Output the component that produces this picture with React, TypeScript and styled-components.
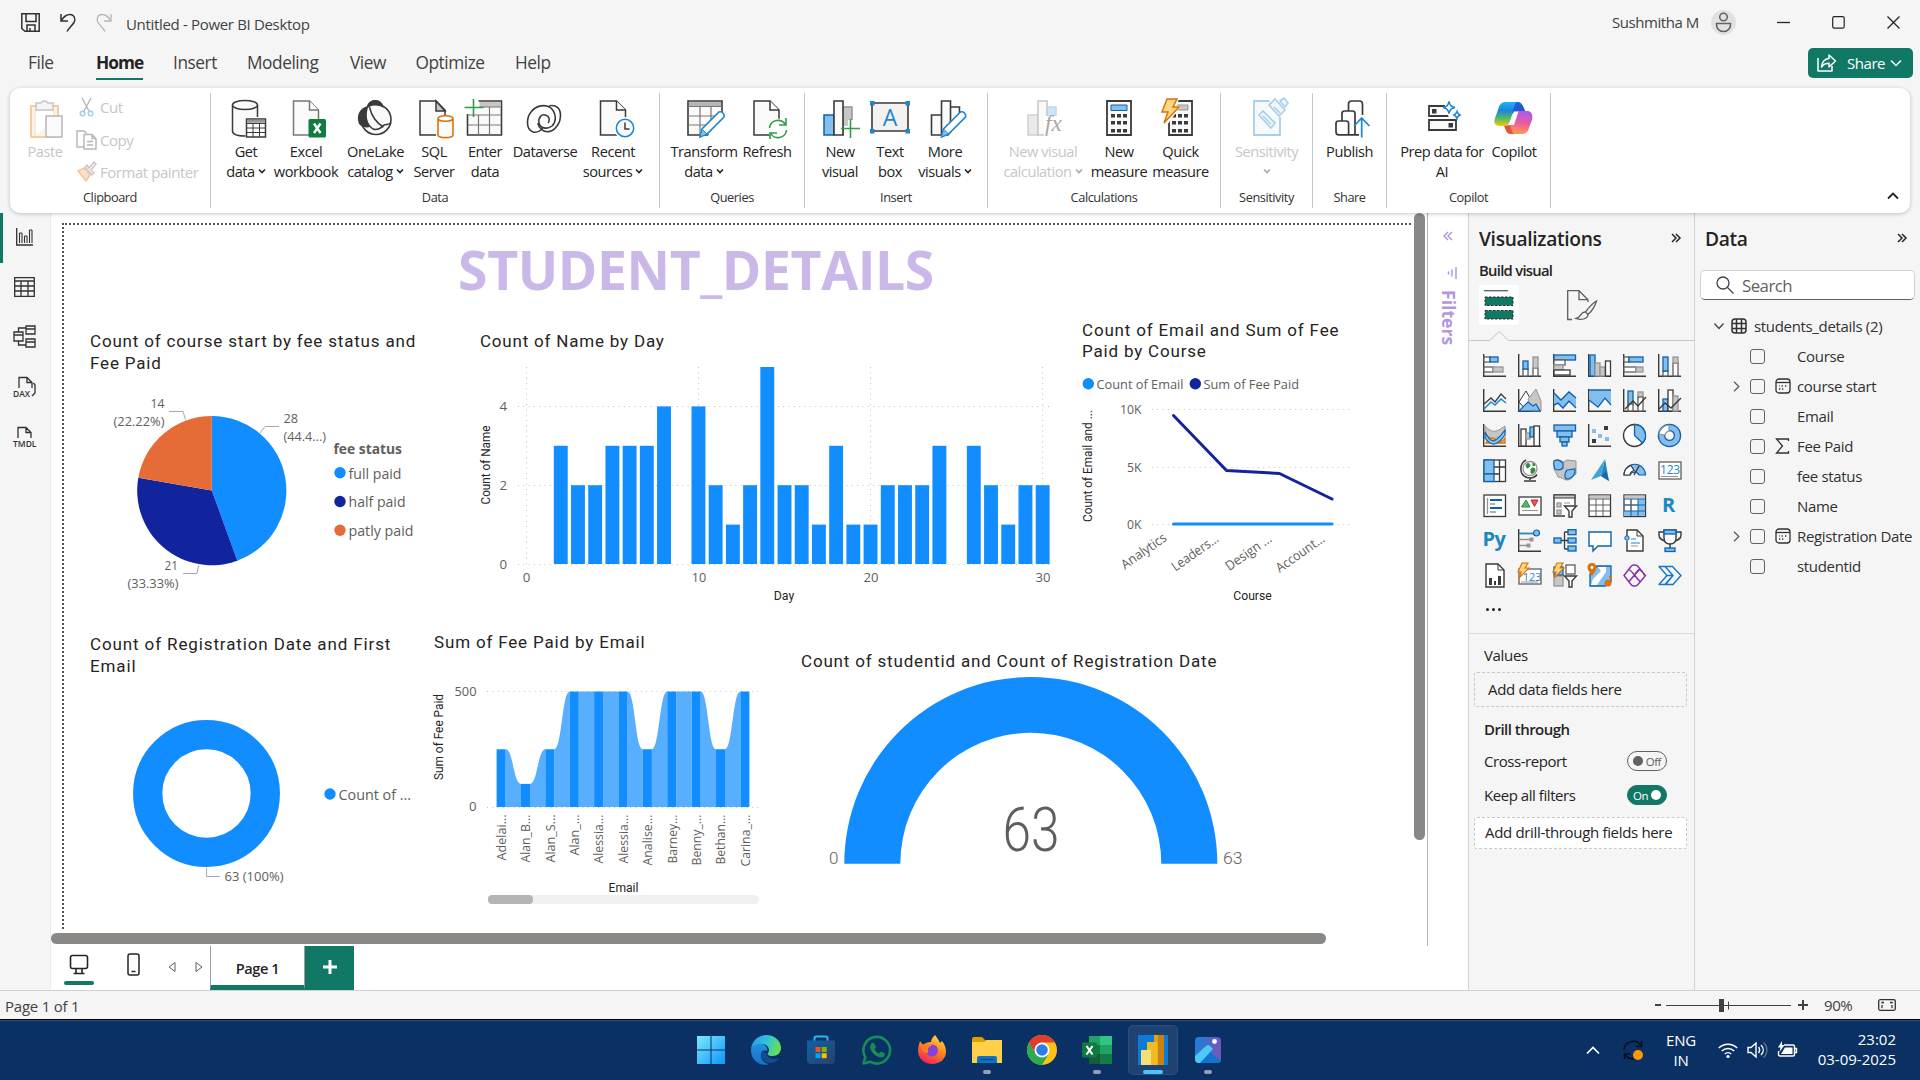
import React from "react";
import styled, { createGlobalStyle, css } from "styled-components";

const UI = '"Open Sans", "Noto Sans", sans-serif';
const DIN = 'Roboto, "Liberation Sans", sans-serif';
const GREEN = "#117865";
const BLUE = "#118dff";
const NAVY = "#12239e";
const ORANGE = "#e66c37";

const Global = createGlobalStyle`
  html, body { margin: 0; padding: 0; }
  body { background: #f5f5f5; font-family: ${UI}; color: #252423; overflow: hidden; }
  * { box-sizing: border-box; }
  svg { display: block; flex: none; overflow: visible; }
`;

/* ---------- shell ---------- */
const Shell = styled.div`
  width: 1920px;
  height: 1080px;
  display: flex;
  flex-direction: column;
  background: #f5f5f5;
  font-size: 15px;
  letter-spacing: -0.03em;
  white-space: nowrap;
`;

const TitleBar = styled.header`
  height: 40px;
  display: flex;
  align-items: center;
  padding: 4px 20px 0 21px;
  flex: none;
`;
const QuickIcons = styled.div`
  display: flex;
  gap: 18px;
  width: 105px;
`;
const DocTitle = styled.div`
  flex: 1;
  padding-top: 4px;
  letter-spacing: -0.022em;
  color: #424242;
`;
const UserName = styled.div`
  width: 92px;
  color: #424242;
`;
const Avatar = styled.div`
  width: 25px;
  height: 25px;
  border-radius: 50%;
  background: #e1e1e1;
  display: grid;
  place-items: center;
  margin: 0 41px 0 7px;
`;
const WindowButtons = styled.div`
  display: flex;
  gap: 42px;
`;

const MenuBar = styled.nav`
  height: 48px;
  display: flex;
  padding: 0 7px 0 28px;
  flex: none;
`;
const MenuSlot = styled.div<{ $w: number }>`
  width: ${(p) => p.$w}px;
  display: flex;
  align-items: flex-start;
`;
const MenuItem = styled.span<{ $active?: boolean }>`
  font-size: 17.3px;
  line-height: 46px;
  height: 40px;
  color: #424242;
  ${(p) =>
    p.$active &&
    css`
      color: #242424;
      font-weight: 700;
      letter-spacing: -0.055em;
      border-bottom: 2px solid ${GREEN};
    `}
`;
const ShareButton = styled.button`
  margin: 8px 0 0 auto;
  width: 105px;
  height: 30px;
  border: 0;
  border-radius: 5px;
  background: ${GREEN};
  color: #fff;
  font: 15px ${UI};
  letter-spacing: -0.03em;
  display: flex;
  align-items: center;
  padding: 0 10px 0 9px;
  gap: 10px;
  span {
    width: 35px;
  }
  svg:last-child {
    margin-left: -2px;
  }
`;

/* ---------- ribbon ---------- */
const Ribbon = styled.section`
  margin: 0 10px;
  height: 125px;
  flex: none;
  display: flex;
  background: #fff;
  border-radius: 10px;
  box-shadow: 0 1px 4px rgba(0, 0, 0, 0.22);
  padding: 5px 0;
  position: relative;
  z-index: 2;
`;
const Group = styled.div<{ $w: number }>`
  width: ${(p) => p.$w}px;
  border-right: 1px solid #c8c6c4;
  display: flex;
  flex-direction: column;
`;
const GroupBody = styled.div<{ $pl: number }>`
  display: flex;
  height: 96px;
  padding: 5px 0 0 ${(p) => p.$pl}px;
`;
const GroupLabel = styled.div`
  font-size: 12.8px;
  line-height: 16px;
  text-align: center;
  color: #323130;
`;
const RibbonButton = styled.div<{ $w: number; $off?: boolean }>`
  width: ${(p) => p.$w}px;
  display: flex;
  flex-direction: column;
  align-items: center;
  font-size: 14.6px;
  line-height: 20px;
  color: ${(p) => (p.$off ? "#c8c6c4" : "#252423")};
  svg.icon {
    margin-bottom: 1px;
  }
`;
const ButtonLine = styled.div`
  display: flex;
  align-items: center;
  gap: 3px;
  height: 20px;
`;
const ClipList = styled.div`
  display: flex;
  flex-direction: column;
  gap: 12.5px;
  padding: 0 0 0 7px;
  margin-top: -1px;
`;
const ClipItem = styled.div`
  display: flex;
  align-items: center;
  gap: 3px;
  height: 20px;
  color: #c8c6c4;
`;
const RibbonEnd = styled.div`
  flex: 1;
  display: flex;
  justify-content: flex-end;
  align-items: flex-end;
  padding: 0 11px 8px 0;
`;

/* ---------- workspace ---------- */
const Workspace = styled.main`
  flex: 1;
  display: flex;
  min-height: 0;
`;
const Rail = styled.aside`
  width: 51px;
  display: flex;
  flex-direction: column;
  border-right: 1px solid #ebebeb;
`;
const RailItem = styled.div<{ $active?: boolean }>`
  height: 50px;
  display: grid;
  place-items: center;
  padding: 0 4px 3px 0;
  border-left: 3px solid ${(p) => (p.$active ? GREEN : "transparent")};
`;
const Center = styled.div`
  width: 1417px;
  background: #fff;
  display: flex;
  flex-direction: column;
`;
const CanvasRow = styled.div`
  height: 733px;
  display: flex;
`;
const CanvasArea = styled.div`
  width: 1377px;
  border-right: 1px solid #b8b6b4;
  display: grid;
  grid-template-columns: 1363px 13px;
  grid-template-rows: 720px 13px;
`;
const ReportPage = styled.div`
  position: relative;
  margin: 10px 3px 4px 11px;
  border-top: 2px dotted #555;
  border-left: 2px dotted #555;
`;
const VScroll = styled.div`
  width: 11px;
  height: 627px;
  border-radius: 6px;
  background: #8a8886;
`;
const HScroll = styled.div`
  width: 1275px;
  height: 11px;
  border-radius: 6px;
  background: #8a8886;
`;
const FiltersPane = styled.div`
  width: 40px;
  display: flex;
  flex-direction: column;
  align-items: center;
  padding-top: 18px;
  color: #b296e0;
`;
const FiltersLabel = styled.div`
  writing-mode: vertical-rl;
  font-weight: 700;
  font-size: 17.6px;
  letter-spacing: 0;
  line-height: 22px;
  margin-top: 11px;
  padding-left: 1px;
`;

/* Visuals sit freely on the report page; x and y are in window pixels. */
const Visual = styled.div<{ $x: number; $y: number; $w: number }>`
  position: absolute;
  left: ${(p) => p.$x - 64}px;
  top: ${(p) => p.$y - 225}px;
  width: ${(p) => p.$w}px;
`;
const VisualTitle = styled.div<{ $ls?: number; $lh?: number }>`
  font-family: ${DIN};
  font-size: 17px;
  line-height: ${(p) => p.$lh ?? 22}px;
  letter-spacing: ${(p) => p.$ls ?? 0.83}px;
  color: #252423;
`;
const ReportHeading = styled.h1`
  margin: 0;
  font-size: 53.5px;
  line-height: 60px;
  font-weight: 700;
  letter-spacing: -0.0075em;
  color: #c9b8e8;
  text-align: center;
`;

/* ---------- page tabs ---------- */
const Tabs = styled.div`
  flex: 1;
  display: flex;
`;
const ViewToggle = styled.div<{ $w: number; $active?: boolean }>`
  width: ${(p) => p.$w}px;
  display: flex;
  flex-direction: column;
  align-items: center;
  padding-top: 6px;
  &::after {
    content: "";
    width: 30px;
    height: 4px;
    border-radius: 2px;
    margin-top: 4px;
    background: ${(p) => (p.$active ? GREEN : "transparent")};
  }
`;
const TabArrows = styled.div`
  width: 50px;
  display: flex;
  gap: 19px;
  align-items: center;
  padding: 0 0 2px 8px;
`;
const PageTab = styled.div`
  width: 95px;
  border-left: 1px solid #a19f9d;
  border-right: 1px solid #a19f9d;
  border-bottom: 5px solid ${GREEN};
  display: grid;
  place-items: center;
  font-weight: 600;
  font-size: 14.6px;
  padding-top: 4px;
`;
const AddTab = styled.div`
  width: 49px;
  background: ${GREEN};
  display: grid;
  place-items: center;
  padding-bottom: 2px;
`;

/* ---------- side panes ---------- */
const Pane = styled.aside`
  width: 226px;
  border-left: 1px solid #d1d1d1;
  display: flex;
  flex-direction: column;
  letter-spacing: -0.022em;
`;
const PaneHead = styled.div`
  display: flex;
  justify-content: space-between;
  align-items: center;
  height: 28px;
  margin-top: 11px;
  padding: 0 13px 0 10px;
  font-weight: 600;
  font-size: 19.2px;
`;
const BuildLabel = styled.div`
  font-weight: 600;
  font-size: 14.8px;
  letter-spacing: -0.048em;
  padding: 8px 0 0 10px;
  line-height: 20px;
`;
const ModeTabs = styled.div`
  display: flex;
  padding: 5px 0 0 10px;
  gap: 42px;
`;
const ModeTab = styled.div<{ $on?: boolean }>`
  width: 40px;
  height: 40px;
  border-radius: 3px;
  display: grid;
  place-items: center;
  background: ${(p) => (p.$on ? "#fff" : "transparent")};
`;
const VizGrid = styled.div`
  display: grid;
  grid-template-columns: repeat(6, 35px);
  grid-auto-rows: 35px;
  padding: 3px 0 0 9px;
  height: 248px;
  svg {
    margin: 5px;
  }
`;
const Dots = styled.div`
  display: flex;
  gap: 3px;
  height: 40px;
  padding: 14px 0 0 17px;
  border-bottom: 1px solid #dcdcdc;
  i {
    width: 3px;
    height: 3px;
    border-radius: 2px;
    background: #252423;
  }
`;
const WellLabel = styled.div<{ $bold?: boolean; $mt: number }>`
  margin-top: ${(p) => p.$mt}px;
  padding-left: 15px;
  line-height: 20px;
  font-weight: ${(p) => (p.$bold ? 600 : 400)};
  letter-spacing: ${(p) => (p.$bold ? "-0.035em" : "inherit")};
`;
const Well = styled.div<{ $mt: number; $h: number; $pl: number; $white?: boolean }>`
  margin: ${(p) => p.$mt}px 0 0 5px;
  width: 213px;
  height: ${(p) => p.$h}px;
  border: 1px dashed #c8c8c8;
  border-radius: 3px;
  background: ${(p) => (p.$white ? "#fff" : "transparent")};
  padding-left: ${(p) => p.$pl}px;
  line-height: ${(p) => p.$h - 3}px;
`;
const SwitchRow = styled.div<{ $mt: number }>`
  margin-top: ${(p) => p.$mt}px;
  height: 20px;
  padding: 0 27px 0 15px;
  display: flex;
  justify-content: space-between;
  align-items: center;
  letter-spacing: -0.03em;
`;
const Switch = styled.div<{ $on?: boolean }>`
  width: 40px;
  height: 20px;
  border-radius: 10px;
  border: 1px solid ${(p) => (p.$on ? GREEN : "#616161")};
  background: ${(p) => (p.$on ? GREEN : "transparent")};
  color: ${(p) => (p.$on ? "#fff" : "#616161")};
  font-size: 11.5px;
  display: flex;
  flex-direction: ${(p) => (p.$on ? "row-reverse" : "row")};
  align-items: center;
  justify-content: space-between;
  padding: 0 5px;
  i {
    width: 10px;
    height: 10px;
    border-radius: 50%;
    background: currentColor;
  }
`;
const SearchBox = styled.div`
  margin: 18px 0 0 5px;
  width: 215px;
  height: 30px;
  border: 1px solid #d1d1d1;
  border-bottom-color: #616161;
  border-radius: 5px;
  background: #fff;
  display: flex;
  align-items: center;
  gap: 8px;
  padding-left: 15px;
  font-size: 16.8px;
  letter-spacing: -0.03em;
  color: #616161;
`;
const TableRow = styled.div`
  display: flex;
  align-items: center;
  height: 30px;
  margin-top: 11px;
  padding-left: 19px;
  color: #323130;
  svg:first-child {
    margin-right: 7px;
  }
  svg:nth-child(2) {
    margin-right: 7px;
  }
`;
const FieldRow = styled.div`
  display: grid;
  grid-template-columns: 17px 25px 22px 1fr;
  align-items: center;
  height: 30px;
  padding-left: 38px;
  color: #323130;
`;
const Checkbox = styled.i`
  width: 15px;
  height: 15px;
  border: 1px solid #616161;
  border-radius: 3px;
`;

/* ---------- status bar ---------- */
const StatusBar = styled.footer`
  height: 29px;
  flex: none;
  border-top: 1px solid #d1d1d1;
  display: flex;
  align-items: center;
  padding: 0 24px 0 5px;
  color: #424242;
  font-size: 15px;
`;
const PageCount = styled.div`
  flex: 1;
  padding-top: 2px;
  letter-spacing: -0.015em;
`;
const ZoomValue = styled.div`
  width: 54px;
  margin-left: 17px;
`;

/* ---------- windows taskbar ---------- */
const Taskbar = styled.div`
  height: 61px;
  flex: none;
  border-top: 1px solid #000;
  background: linear-gradient(#34507c 0 1px, #0a3064 1px);
  display: flex;
  color: #fff;
`;
const Apps = styled.div`
  display: flex;
  padding: 5px 0 0 686px;
  width: 1580px;
  gap: 5.2px;
`;
const AppButton = styled.div<{ $state?: "open" | "active" }>`
  width: 50px;
  height: 50px;
  border-radius: 5px;
  display: flex;
  flex-direction: column;
  align-items: center;
  padding-top: 10px;
  background: ${(p) => (p.$state === "active" ? "rgba(255,255,255,0.09)" : "transparent")};
  box-shadow: ${(p) => (p.$state === "active" ? "inset 0 0 0 1px rgba(255,255,255,0.06)" : "none")};
  &::after {
    content: "";
    margin-top: 5px;
    height: 4px;
    border-radius: 2px;
    width: ${(p) => (p.$state === "active" ? 20 : p.$state ? 8 : 0)}px;
    background: ${(p) => (p.$state === "active" ? "#4cc2ff" : "#93a1b8")};
  }
`;
const Tray = styled.div`
  flex: 1;
  display: flex;
  align-items: center;
  padding-left: 6px;
`;
const Lang = styled.div`
  width: 36px;
  margin-left: 20px;
  text-align: center;
  line-height: 20px;
  letter-spacing: -0.01em;
`;
const TrayIcons = styled.div`
  display: flex;
  gap: 9px;
  margin-left: 19px;
`;
const Clock = styled.div`
  margin-left: auto;
  padding: 0 24px 2px 0;
  text-align: right;
  line-height: 20px;
  letter-spacing: 0;
`;

/* ---------- shared glyphs ---------- */
const D = "#3b3a39";
const G = "#c8c6c4";
const GS = "#979593";
const LB = "#83beec";
const SB = "#0f62ac";

const Caret = ({ c = "#252423" }: { c?: string }) => (
  <svg width="8" height="8" viewBox="0 0 8 8" fill="none" stroke={c} strokeWidth="1.6">
    <path d="M1 2.5 4 5.5 7 2.5" />
  </svg>
);
const Double = ({ dir, c }: { dir: 1 | -1; c: string }) => (
  <svg width="10" height="10" viewBox="0 0 10 10" fill="none" stroke={c} strokeWidth="1.5">
    <path d={dir === 1 ? "M1 1l4 4-4 4M5 1l4 4-4 4" : "M9 1 5 5l4 4M5 1 1 5l4 4"} />
  </svg>
);

/* ---------- ribbon icons, 40 x 42 ---------- */
const ribbonIcons: Record<string, React.ReactNode> = {
  paste: (
    <>
      <path d="M6 8h27v31H6z" fill="#fdf3e3" stroke="#f3cfa0" strokeWidth="2" />
      <path d="M10 38V12h19v10" fill="#fff" stroke="#e6e0d8" />
      <path d="M11 5h5a4 4 0 0 1 7 0h5v7H11z" fill="#f5f5f5" stroke="#c8c6c4" strokeWidth="1.5" />
      <path d="M21 18h16v21H21z" fill="#fafafa" stroke="#b8b6b4" strokeWidth="1.5" />
    </>
  ),
  getdata: (
    <>
      <path d="M4 7v26c0 3 5 5 13 5V20h12V7" fill="#fafafa" />
      <path d="M4 7v26c0 3 5 5 13 5M29 7v12" fill="none" stroke={D} strokeWidth="1.5" />
      <ellipse cx="16.500" cy="7" rx="12.500" ry="4.500" fill="#fafafa" stroke={D} strokeWidth="1.5" />
      <path d="M18 21h19v18H18z" fill="#fff" stroke={D} strokeWidth="1.5" />
      <path d="M18.700 21.700h17.600v3H18.700z" fill={GS} />
      <path d="M18 25.500h19M18 30h19M18 34.500h19M24.500 25v14M31 25v14" stroke={D} strokeWidth="1" />
    </>
  ),
  excel: (
    <>
      <path d="M7 3h16l9 9v25H7z" fill="#fafafa" stroke="#797775" strokeWidth="1.500" />
      <path d="M23 3v9h9" fill="#fff" stroke="#797775" strokeWidth="1.500" />
      <rect x="22" y="21" width="17.500" height="18.500" rx="1.500" fill="#107c41" />
      <path d="m27.500 25.500 6.500 9.500M34 25.500 27.500 35" stroke="#fff" strokeWidth="2.400" />
    </>
  ),
  onelake: (
    <>
      <path d="M12 9c1-4 4-7 8-7s7 3 8 7z" fill={D} />
      <circle cx="21" cy="21.500" r="15" fill="#fafafa" stroke={D} strokeWidth="1.600" />
      <path d="M13 8C4 10 1 18 4 26c3 3 7 4 11 3-4-5-5-13-2-21z" fill={D} />
      <path d="M14.500 9c2 9 7 16 14 20M12 10c-2 8-1 16 6 21 6 2 9-2 11-4 2-1 5 0 7-2" fill="none" stroke={D} strokeWidth="1.500" />
      <path d="M12 9c5-3 13-2 17 1-1-5-4-8-9-8s-8 4-8 7z" fill={D} />
    </>
  ),
  sql: (
    <>
      <path d="M6 3h16l9 9v25H6z" fill="#fafafa" stroke={D} strokeWidth="1.500" />
      <path d="M22 3v10h9z" fill="#c8c6c4" stroke={D} strokeWidth="1.500" />
      <path d="M24 21v16c0 1.600 3 2.600 7.500 2.600S39 38.600 39 37V21z" fill="#fafafa" stroke="#fff" strokeWidth="4" />
      <path d="M24 21v16c0 1.600 3 2.600 7.500 2.600S39 38.600 39 37V21" fill="#fafafa" stroke="#d9730d" strokeWidth="1.600" />
      <ellipse cx="31.500" cy="20.500" rx="7.500" ry="2.700" fill="#fff" stroke="#d9730d" strokeWidth="1.600" />
    </>
  ),
  enter: (
    <>
      <path d="M4 3h34v34H4z" fill="#fafafa" stroke={D} strokeWidth="1.600" />
      <path d="M16 4h21v5H16z" fill="#c8c6c4" />
      <path d="M16 9h22M4 17h34M4 27h34M15 17v20M26 9v28" stroke="#797775" strokeWidth="1.200" />
      <path d="M1 0h14v16H1z" fill="#fff" />
      <path d="M10 1v18M1 9.500h19" stroke="#2e9e4a" strokeWidth="1.600" />
    </>
  ),
  dataverse: (
    <g fill="none" stroke={D} strokeWidth="1.600">
      <path d="M9 34c-8-3-6-15-2-20 5-7 15-8 20-4 5 5 6 13 1 18-5 4-12 2-13-3-1-6 3-9 6-8 5 1 5 6 3 8" />
      <path d="M31 8c8 3 6 15 2 20-5 7-12 7-16 3M9 34c4 1 7-1 9-3M31 8c-3-1-6 0-7 1M14 25c0 3 2 6 5 6" />
    </g>
  ),
  recent: (
    <>
      <path d="M5 3h16l9 9v25H5z" fill="#fafafa" stroke={D} strokeWidth="1.500" />
      <path d="M21 3v9h9" fill="#fff" stroke={D} strokeWidth="1.500" />
      <circle cx="29.500" cy="30" r="11" fill="#fff" />
      <circle cx="29.500" cy="30" r="8.700" fill="#fafafa" stroke="#1b87d0" strokeWidth="1.500" />
      <path d="M29.500 24.500V31h4.500" fill="none" stroke={D} strokeWidth="1.500" />
    </>
  ),
  transform: (
    <>
      <path d="M3 3h34v34H3z" fill="#fafafa" stroke={D} strokeWidth="1.600" />
      <path d="M4 4h32v4H4z" fill="#b8b6b4" />
      <path d="M3 8.500h34M3 18h34M3 27h34M15 8v29M26 8v29" stroke="#797775" strokeWidth="1.200" />
      <path d="M40 14v25H22z" fill="#fff" />
      <path d="m15 39 2-8 17-17c3-1 6 2 5 5L22 36z" fill="#fff" stroke="#1b87d0" strokeWidth="1.600" />
      <path d="m15 39 2-8 5 5z" fill={LB} stroke="#1b87d0" />
    </>
  ),
  refresh: (
    <>
      <path d="M7 3h16l9 9v25H7z" fill="#fafafa" stroke={D} strokeWidth="1.500" />
      <path d="M23 3v9h9" fill="#fff" stroke={D} strokeWidth="1.500" />
      <circle cx="31" cy="31" r="10.500" fill="#fff" />
      <path d="M22.500 30a8.500 8.500 0 0 1 16-3M39.500 32a8.500 8.500 0 0 1-16 3M39 20v7h-7M23 41v-6h7" fill="none" stroke="#2e9e4a" strokeWidth="1.600" />
    </>
  ),
  newvisual: (
    <>
      <path d="M23 9h9v28h-9z" fill="#c8c6c4" stroke={GS} strokeWidth="1.500" />
      <path d="M4 17h10v20H4z" fill={LB} stroke={SB} strokeWidth="1.500" />
      <path d="M14 3h9v34h-9z" fill="#fafafa" stroke={D} strokeWidth="1.600" />
      <path d="M24 28h14v10H24zM28 22h6v16h-6z" fill="#fff" />
      <path d="M30.500 21v19M21 30.500h19" stroke="#2e9e4a" strokeWidth="1.600" />
    </>
  ),
  textbox: (
    <>
      <path d="M2 5h36v28H2z" fill="#f3f2f1" stroke={D} strokeWidth="1.600" />
      <path d="M0 3h4.500v4.500H0zM35.500 3H40v4.500h-4.500zM0 31h4.500v4.500H0zM35.500 31H40v4.500h-4.500z" fill="#1b87d0" />
      <text x="20" y="28" fontSize="23" fill="#1b87d0" textAnchor="middle" letterSpacing="0">A</text>
    </>
  ),
  morevisuals: (
    <>
      <path d="M4 17h10v20H4zM23 9h9v28h-9zM14 3h9v34h-9z" fill="#fafafa" stroke={D} strokeWidth="1.600" />
      <path d="M40 14v25H20z" fill="#fff" />
      <path d="m14 39 2-8 17-17c3-1 6 2 5 5L21 36z" fill="#fff" stroke="#1b87d0" strokeWidth="1.600" />
      <path d="m14 39 2-8 5 5z" fill={LB} stroke="#1b87d0" />
    </>
  ),
  newcalc: (
    <>
      <path d="M23 9h9v12h-9z" fill="#cfe4f7" stroke="#bcd9f2" strokeWidth="1.500" />
      <path d="M4 17h10v20H4z" fill="#eaeaea" stroke="#d2d0ce" strokeWidth="1.500" />
      <path d="M14 3h9v34h-9z" fill="#fafafa" stroke="#c8c6c4" strokeWidth="1.500" />
      <path d="M20 18h18v20H20z" fill="#fff" />
      <text x="21" y="33" fontFamily='"Liberation Serif", serif' fontStyle="italic" fontSize="23" fill="#a9a7a5" letterSpacing="0">fx</text>
    </>
  ),
  newmeasure: (
    <>
      <path d="M8 3h24v34H8z" fill="#fafafa" stroke={D} strokeWidth="1.800" />
      <path d="M12 7h16v5.500H12z" fill={LB} stroke={SB} />
      <path d="M12 16h4v3.500h-4zM18 16h4v3.500h-4zM24 16h4v3.500h-4zM12 23h4v3.500h-4zM18 23h4v3.500h-4zM24 23h4v3.500h-4zM12 31h4v3.500h-4zM18 31h4v3.500h-4zM24 31h4v3.500h-4z" fill={D} />
    </>
  ),
  quick: (
    <>
      <path d="M8 3h23v34H8z" fill="#fafafa" stroke={D} strokeWidth="1.800" />
      <path d="M14 7h13v5H14z" fill="#c8c6c4" stroke={GS} />
      <path d="M11 16h4v3.500h-4zM17 16h4v3.500h-4zM23 16h4v3.500h-4zM11 23h4v3.500h-4zM17 23h4v3.500h-4zM23 23h4v3.500h-4zM11 31h4v3.500h-4zM17 31h4v3.500h-4zM23 31h4v3.500h-4z" fill={D} />
      <path d="M4 0h14l-2 8h4L6 27H0z" fill="#fff" />
      <path d="M6 1h10l-4 8h6L3 25l4-11H1z" fill="#fbd77f" stroke="#d9730d" strokeWidth="1.500" />
    </>
  ),
  sensitivity: (
    <>
      <path d="M7 3h26v34H7z" fill="#f7fafc" stroke="#a6cfea" strokeWidth="1.800" />
      <path d="M22 0h18v19H26z" fill="#fff" />
      <g fill="#f0f7fc" stroke="#a6cfea" strokeWidth="1.600">
        <path d="m12 17 4-4 12 12-4 5zM22 7l6-6 10 11-6 6zM33 3l4-3 4 5-3 4z" />
        <path d="m16 18 8 8M27 9l6 6" />
      </g>
    </>
  ),
  publish: (
    <g fill="none" stroke={D} strokeWidth="1.700">
      <path d="M32.500 17V6q0-3-3-3h-8q-3 0-3 3v7" />
      <path d="M25 36V15.500q0-2.500-2.500-2.500h-8q-2.500 0-2.500 2.500V23" />
      <path d="M18.600 36V25.500q0-2.500-2.500-2.500H8.500Q6 23 6 25.500v8.500q0 2.800 2.800 2.800H29" />
      <path d="M31.700 39.500V20M24 28l7.700-8 7.700 8" stroke="#1b87d0" />
    </g>
  ),
  prep: (
    <>
      <path d="M4 8h28v10H4zM4 22h27v10H4z" fill="#fafafa" stroke={D} strokeWidth="1.800" />
      <path d="M7 11h4.500v4.500H7zM23.500 25H28v4.500h-4.500z" fill={D} />
      <path d="M18 2h20v18H24z" fill="#fff" />
      <path d="M24 3.500c1 4 2 5 6 6-4 1-5 2-6 6-1-4-2-5-6-6 4-1 5-2 6-6zM32 13.500c.6 2 1 2.500 3 3.500-2 .8-2.500 1.300-3 3.500-.7-2.200-1.200-2.700-3-3.500 1.800-1 2.300-1.500 3-3.500z" fill="#fff" stroke="#1b87d0" strokeWidth="1.500" />
    </>
  ),
  copilot: (
    <>
      <defs>
        <linearGradient id="cpA" x1="0.300" y1="0" x2="0.300" y2="1">
          <stop offset="0" stopColor="#18b8f0" />
          <stop offset="0.350" stopColor="#1d84e0" />
          <stop offset="0.650" stopColor="#4cb86a" />
          <stop offset="1" stopColor="#f6c90e" />
        </linearGradient>
        <linearGradient id="cpB" x1="0.700" y1="0" x2="0.500" y2="1">
          <stop offset="0" stopColor="#a45cf0" />
          <stop offset="0.500" stopColor="#ea5aa4" />
          <stop offset="1" stopColor="#ff9c50" />
        </linearGradient>
        <linearGradient id="cpC" x1="0" y1="0" x2="1" y2="1">
          <stop offset="0" stopColor="#1b6fe0" />
          <stop offset="1" stopColor="#2742c8" />
        </linearGradient>
      </defs>
      <path d="M17 4h8c5 0 6 8 8 10h-9c-5 0-6 4-7 8z" fill="url(#cpC)" />
      <path d="M11 27h8l5-14h10c5 0 6 4 5 9l-3 8c-1 5-4 6-8 6H18c-5 0-5-5-7-9z" fill="url(#cpB)" />
      <path d="M24 4H12C8 4 6 8 5 12L2 20c-2 6 1 8 5 8h4c5 0 6-4 7-8l3-11c1-3 1-5 3-5z" fill="url(#cpA)" />
      <path d="M11 28h6c2 3 1 7 5 8h-4c-5 0-5-5-7-8z" fill="#e8503c" />
      <path d="M21 13.500h4.500L21 27h-5.500z" fill="#fff" />
    </>
  ),
};

type Btn = { icon: string; a: string; b?: string; w: number; caret?: boolean; off?: boolean; dx?: number };
const groups: { label: string; w: number; pl: number; items: Btn[] }[] = [
  {
    label: "Data", w: 449, pl: 8,
    items: [
      { icon: "getdata", a: "Get", b: "data", caret: true, w: 54, dx: 2.5 },
      { icon: "excel", a: "Excel", b: "workbook", w: 66, dx: 0.5 },
      { icon: "onelake", a: "OneLake", b: "catalog", caret: true, w: 73, dx: -1 },
      { icon: "sql", a: "SQL", b: "Server", w: 44 },
      { icon: "enter", a: "Enter", b: "data", w: 58, dx: -1.5 },
      { icon: "dataverse", a: "Dataverse", w: 62, dx: -1 },
      { icon: "recent", a: "Recent", b: "sources", caret: true, w: 74, dx: 2.5 },
    ],
  },
  {
    label: "Queries", w: 145, pl: 8,
    items: [
      { icon: "transform", a: "Transform", b: "data", caret: true, w: 72, dx: 1 },
      { icon: "refresh", a: "Refresh", w: 54 },
    ],
  },
  {
    label: "Insert", w: 183, pl: 9,
    items: [
      { icon: "newvisual", a: "New", b: "visual", w: 52 },
      { icon: "textbox", a: "Text", b: "box", w: 48 },
      { icon: "morevisuals", a: "More", b: "visuals", caret: true, w: 62, dx: 2.5 },
    ],
  },
  {
    label: "Calculations", w: 233, pl: 10,
    items: [
      { icon: "newcalc", a: "New visual", b: "calculation", caret: true, off: true, w: 90, dx: 1 },
      { icon: "newmeasure", a: "New", b: "measure", w: 62 },
      { icon: "quick", a: "Quick", b: "measure", w: 61 },
    ],
  },
  { label: "Sensitivity", w: 92, pl: 0, items: [{ icon: "sensitivity", a: "Sensitivity", b: "", caret: true, off: true, w: 91 }] },
  { label: "Share", w: 74, pl: 0, items: [{ icon: "publish", a: "Publish", w: 73 }] },
  {
    label: "Copilot", w: 164, pl: 10,
    items: [
      { icon: "prep", a: "Prep data for", b: "AI", w: 90, dx: 3 },
      { icon: "copilot", a: "Copilot", w: 54, dx: -1 },
    ],
  },
];

const RibbonBtn = ({ icon, a, b, w, caret, off, dx = 0 }: Btn) => (
  <RibbonButton $w={w} $off={off}>
    <svg className="icon" width="40" height="42" viewBox={`${-dx} 0 40 42`}>
      {ribbonIcons[icon]}
    </svg>
    <ButtonLine>{a}</ButtonLine>
    {b !== undefined && (
      <ButtonLine>
        {b}
        {caret && <Caret c={off ? "#a9a7a5" : undefined} />}
      </ButtonLine>
    )}
  </RibbonButton>
);

/* ---------- visualization gallery icons, 24 x 24 ---------- */
const axis = <path d="M.7 0v22.300H23" fill="none" stroke={D} strokeWidth="1.400" />;
const R = ({ b, t }: { b: [number, number, number, number]; t: "w" | "b" | "g" | "d" }) => (
  <rect
    x={b[0]} y={b[1]} width={b[2]} height={b[3]} strokeWidth="1.300"
    fill={{ w: "#fff", b: LB, g: G, d: "#fff" }[t]}
    stroke={{ w: "#605e5c", b: SB, g: GS, d: D }[t]}
  />
);
const Bolt = () => (
  <path d="M4-1h6L7 4h4L1 14l2-6H0z" fill="#fbd77f" stroke="#d9730d" strokeWidth="1.200" />
);
const Funnel = () => (
  <path d="M11.500 12h12l-4.500 5v6h-3v-6z" fill="#fff" stroke={D} strokeWidth="1.400" />
);
const vizIcons: React.ReactNode[] = [
  <>{axis}<R b={[1, 3, 6, 5]} t="w" /><R b={[7, 3, 8, 5]} t="b" /><R b={[1, 13, 9, 5]} t="w" /><R b={[10, 13, 10, 5]} t="g" /></>,
  <>{axis}<R b={[5, 15, 5, 7]} t="w" /><R b={[5, 7, 5, 8]} t="b" /><R b={[15, 14, 5, 8]} t="w" /><R b={[15, 3, 5, 11]} t="g" /></>,
  <>{axis}<R b={[1, 1, 21.500, 5]} t="b" /><R b={[1, 6, 11, 5]} t="w" /><R b={[1, 11, 9, 5]} t="g" /><R b={[1, 16, 16, 5]} t="d" /></>,
  <>{axis}<R b={[2, 1, 5, 21]} t="b" /><R b={[7, 9, 5, 13]} t="g" /><R b={[12, 13, 5, 9]} t="g" /><R b={[17.500, 7, 5, 15]} t="d" /></>,
  <>{axis}<R b={[1, 3, 5, 5]} t="w" /><R b={[6, 3, 14, 5]} t="b" /><R b={[1, 13, 12, 5]} t="w" /><R b={[13, 13, 7, 5]} t="g" /></>,
  <>{axis}<R b={[5, 17, 5, 5]} t="w" /><R b={[5, 3, 5, 14]} t="b" /><R b={[15, 9, 5, 13]} t="w" /><R b={[15, 3, 5, 6]} t="g" /></>,
  <>{axis}<path d="m1 20 7-7 4 3 6-6 5 4" fill="none" stroke="#1b87d0" strokeWidth="1.500" /><path d="m1 15 7-6 4 4 6-8 5 5" fill="none" stroke={D} strokeWidth="1.300" /></>,
  <>{axis}<path d="M1 13 8 2l9 16-8 4z" fill="#fff" stroke={D} /><path d="m10 10 8-10 5 12v10h-9z" fill={G} stroke={GS} /><path d="m1 22 9-9 5 4 3-2 4 7z" fill={LB} stroke={SB} strokeWidth="1.200" /></>,
  <>{axis}<path d="m1 4 7 7 8-9 3 4 4 2v10l-4-3-3-2-6 7-5-5-4 1z" fill={LB} /><path d="m1 4 7 7 8-8 7 6M1 16l4-2 5 5 6-7 7 7" fill="none" stroke={SB} strokeWidth="1.400" /></>,
  <>{axis}<path d="M1 1h22v14l-6-7-7 9-9-6z" fill={LB} /><path d="M1 1h22M1 11l9 7 7-9 6 7" fill="none" stroke={SB} strokeWidth="1.300" /></>,
  <>{axis}<R b={[5, 2, 5, 14]} t="b" /><R b={[15, 3, 5, 6]} t="g" /><R b={[5, 15, 5, 7]} t="w" /><R b={[15, 8, 5, 14]} t="w" /><path d="m2 20 8-8 5 5 8-9" fill="none" stroke={D} strokeWidth="1.400" /></>,
  <>{axis}<R b={[5, 10, 5, 12]} t="b" /><R b={[10, 1, 5, 21]} t="d" /><R b={[15, 7, 5, 15]} t="g" /><path d="m1 20 6-6 6 5 10-10" fill="none" stroke={D} strokeWidth="1.400" /></>,
  <>{axis}<path d="M2 2c8 8 11 6 20 0v7c-9 6-12 8-20 1z" fill={G} stroke={GS} /><path d="M3 19c6-14 12 6 19-5v5z" fill="#f7b26a" stroke="#d9730d" strokeWidth="1.300" /><path d="M2 8c7 14 11 10 20-2v5C14 22 9 23 2 14z" fill={LB} stroke={SB} strokeWidth="1.200" /></>,
  <>{axis}<R b={[3, 5, 5, 17]} t="d" /><R b={[8, 9, 4, 6]} t="g" /><R b={[12, 3, 4, 10]} t="b" /><R b={[16, 2, 5.500, 20]} t="d" /></>,
  <><R b={[1, 1, 21.500, 6]} t="b" /><R b={[4, 7, 15, 6]} t="b" /><R b={[7, 13, 9, 5]} t="b" /><R b={[9, 18, 5, 4]} t="b" /></>,
  <>{axis}<path d="M4 5h4v4H4zM10 10h4v4h-4zM17 13h4v4h-4z" fill={LB} /><path d="M16 2h4v4h-4zM4 15h4v4H4z" fill={D} /></>,
  <><circle cx="11.500" cy="11.500" r="11" fill="#fff" stroke={D} strokeWidth="1.300" /><path d="M11.500.5a11 11 0 0 1 8 18.500l-8-7.500z" fill={LB} stroke={SB} strokeWidth="1.300" /></>,
  <><circle cx="11.500" cy="11.500" r="8" fill="none" stroke={SB} strokeWidth="7.500" /><circle cx="11.500" cy="11.500" r="8" fill="none" stroke={LB} strokeWidth="5" /><path d="M1 10A10.500 10.500 0 0 1 11 1v6a5 5 0 0 0-4 4z" fill="#fff" stroke={GS} strokeWidth="1.200" /></>,
  <><R b={[1, 1, 21.500, 21.500]} t="d" /><R b={[1, 1, 10, 14]} t="b" /><R b={[1, 15, 10, 7.500]} t="b" /><path d="M11 8h11M16.500 8v14M11 15h5M16.500 1v7" stroke={D} strokeWidth="1.300" /></>,
  <><circle cx="12" cy="9.500" r="7" fill="#fff" stroke={GS} strokeWidth="1.300" /><path d="M8 6c2-3 4-1 4 0s-1 3-3 3zM13 10c2-2 4-1 4 1s-2 4-4 3zM15 4l2 2-2 1z" fill="#2e8b45" stroke="#2e8b45" /><path d="M8 1C1 5 1 16 9 18.500c4 1 8 0 10-3M12 18.500V21M6 22h12" fill="none" stroke={D} strokeWidth="1.500" /></>,
  <><path d="M1 2c4-3 7 0 10 1l3-2 9 1v13c-3 2-4 6-9 6-4 0-5-3-9-3-2-5-5-8-4-11z" fill={G} stroke={GS} /><path d="M1 2c4-2 7 0 9 2v5c-3 3-6 2-8 1C1 7 0 5 1 2zM14 11l8-1c1 5-3 9-7 10-4 0-4-6-1-9z" fill={LB} stroke={SB} strokeWidth="1.200" /></>,
  <><path d="M17 0 3 21l10-4z" fill="#3aa7d9" /><path d="m17 0-4 17 8 5z" fill="#2486bd" /><path d="m13 17 8 5-3-10z" fill="#1467b0" /></>,
  <><path d="M1 16a10.500 10.500 0 0 1 21.500 0H16a5 5 0 0 0-9 0z" fill={LB} stroke={SB} strokeWidth="1.200" /><path d="M1 16A10.500 10.500 0 0 1 8 6.500l3 5A5 5 0 0 0 7 16z" fill="#fff" stroke={D} strokeWidth="1.200" /><path d="m11 16 5-9" stroke={D} strokeWidth="1.500" /></>,
  <><R b={[1, 3, 22, 17]} t="w" /><text x="12" y="15" fontSize="12" fill="#1b87d0" textAnchor="middle" letterSpacing="-.2">123</text><path d="M3 17.500h17" stroke={GS} /></>,
  <><R b={[1, 1, 21.500, 21.500]} t="d" /><path d="M4.500 4v16M7 10h5M7 18h6" stroke={GS} strokeWidth="1.300" /><path d="M7 6h12M7 14h12" stroke="#0f62ac" strokeWidth="2.200" /></>,
  <><R b={[1, 3, 22, 18]} t="d" /><path d="m8 6 4 7H3.500z" fill="#5fb567" stroke="#2e8b45" /><path d="M13 6h7l-3.500 6.500z" fill="#f0555b" stroke="#c4262e" /><path d="M4 16.500h16" stroke={GS} /></>,
  <><path d="M22 11V1H1v21h11" fill="#fff" stroke={D} strokeWidth="1.400" /><path d="M1 1h21v3H1z" fill={G} stroke={D} /><R b={[4, 9, 4, 4]} t="g" /><R b={[4, 16, 4, 4]} t="g" /><path d="M11 9h6" stroke={GS} /><Funnel /></>,
  <><R b={[1, 1, 21.500, 21.500]} t="d" /><path d="M1.500 1.500h20.500v3H1.500z" fill={G} /><path d="M1 5h21.500M1 11h21.500M1 17h21.500M8 5v17M15 5v17" stroke="#605e5c" /></>,
  <><R b={[1, 1, 21.500, 21.500]} t="d" /><path d="M15 5h7v17H1v-5h14z" fill={LB} /><path d="M1.500 1.500h20.500v3H1.500z" fill={G} /><path d="M1 5h21.500M1 11h21.500M1 17h21.500M8 5v17M15 5v17" stroke={SB} /><path d="M1 11h14M8 5v12" stroke="#605e5c" /></>,
  <text x="10.500" y="18" fontSize="20" fontWeight="700" fill="#1b87c4" textAnchor="middle">R</text>,
  <text x="11" y="17" fontSize="20" fontWeight="700" fill="#1b87c4" textAnchor="middle" letterSpacing="-.5">Py</text>,
  <>{axis}<path d="M1 4.500h14M1 10.500h11M1 16.500h9" stroke={GS} strokeWidth="1.500" /><path d="M1 4.500h14" stroke="#1b87d0" strokeWidth="1.500" /><circle cx="18.500" cy="4" r="3" fill={LB} stroke={SB} strokeWidth="1.200" /><path d="M11.500 8.500h4v4h-4zM8.500 14.500h4v4h-4z" fill={GS} /></>,
  <><path d="M8 11.500h7M11.500 3v17M11.500 3H15M11.500 20H15" fill="none" stroke={D} strokeWidth="1.300" /><R b={[1, 9, 7, 5]} t="b" /><R b={[15, .7, 8, 5]} t="b" /><R b={[15, 9, 8, 5]} t="b" /><R b={[15, 17, 8, 5]} t="b" /></>,
  <path d="M1 3h22v14H10l-5 5v-5H1z" fill="#fff" stroke={SB} strokeWidth="1.400" />,
  <><path d="M4 7V1h10l6 6v15H4V12" fill="#fff" stroke={D} strokeWidth="1.400" /><path d="M14 1v6h6" fill="none" stroke={D} /><circle cx="4" cy="9" r="2.200" fill={LB} stroke={SB} /><path d="M8 10h5M8 14h9" stroke="#1b87d0" /><path d="M8 17h7" stroke={GS} /></>,
  <><path d="M6 3H1v3c0 4 3 5 6 6M18 3h5v3c0 4-3 5-6 6M12 15v4" fill="none" stroke={D} strokeWidth="1.400" /><path d="M6 1h12v8c0 4-2 6-6 6s-6-2-6-6z" fill="#fff" stroke={D} strokeWidth="1.400" /><R b={[6, 1, 12, 4]} t="b" /><R b={[7, 19, 10, 3.500]} t="b" /></>,
  <><path d="M3 0h12l6 6v17H3z" fill="#fff" stroke={D} strokeWidth="1.400" /><path d="M15 0v6h6" fill="none" stroke={D} /><path d="M6 14h3v7H6zM11 17h2v4h-2zM15 12h3v9h-3z" fill={D} /></>,
  <><R b={[1, 5, 22, 15]} t="w" /><text x="14" y="16.500" fontSize="11" fill="#1b87d0" textAnchor="middle" letterSpacing="-.2">123</text><path d="M3 18h17" stroke={GS} /><Bolt /></>,
  <><R b={[1, 12, 9, 10]} t="g" /><R b={[1, 3, 9, 8]} t="b" /><R b={[13, 1, 9, 9]} t="w" /><Funnel /><Bolt /></>,
  <><path d="M9 2h14v16l-6 4H2V10z" fill={LB} stroke={SB} strokeWidth="1.300" /><path d="M14 3h-4l3 4-8 8-2 6h6l4-6 5-7V3z" fill="#fff" /><path d="M4-1c3 0 4.500 2 4.500 4.500S6 9 4 12C2 9-.5 6-.5 3.500S1-1 4-1z" fill="#d9730d" /><circle cx="4" cy="3.500" r="1.400" fill="#fff" /><circle cx="20" cy="19" r="3.500" fill="#d9730d" /><circle cx="22.500" cy="13" r="1.600" fill="#d9730d" /></>,
  <g fill="none" stroke="#8a2da5" strokeWidth="1.400"><path d="M1 11.500 8 2.500q1-1.500 3-1.500h1q2 0 3 1.500l7.500 9-7.500 9Q14 22 12 22h-1q-2 0-3-1.500zM6 5.500q3 2 5.500 5.500 2 3 5.500 6.500M16.500 5Q12 9 11.500 11 9 14 6 17.500M11.500 11l5-5.500q4 3 5 6M11.500 11l-5 6" /></g>,
  <g fill="none" stroke="#1277d4" strokeWidth="1.400" strokeLinejoin="round"><path d="M1 2.500h6l8 9-8 9H1l8-9zM7 2.500h7.500l8.500 9-8 9H7M9 11.500h6M15 11.500 8 20" /></g>,
];

/* ---------- chart text ---------- */
type TxProps = { x: number; y: number; s: number; len?: number; a?: "start" | "middle" | "end"; fill?: string; font?: string; w?: number; rot?: number; children: string };
const Tx = ({ x, y, s, len, a = "start", fill = "#605e5c", font = UI, w = 400, rot, children }: TxProps) => (
  <text
    x={x} y={y + s * 0.35} fontSize={s} fontFamily={font} fontWeight={w} fill={fill} textAnchor={a} letterSpacing="0"
    textLength={len} lengthAdjust="spacingAndGlyphs"
    transform={rot !== undefined ? `rotate(${rot} ${x} ${y})` : undefined}
  >
    {children}
  </text>
);
const Grid = ({ d }: { d: string }) => <path d={d} stroke="#c4c2c0" strokeWidth="1" strokeDasharray="1 4.300" fill="none" />;

const polar = (cx: number, cy: number, r: number, deg: number) => {
  const t = ((deg - 90) * Math.PI) / 180;
  return `${(cx + r * Math.cos(t)).toFixed(2)} ${(cy + r * Math.sin(t)).toFixed(2)}`;
};
const slice = (from: number, to: number) =>
  `M211.800 490.600L${polar(211.8, 490.6, 74.6, from)}A74.600 74.600 0 ${to - from > 180 ? 1 : 0} 1 ${polar(211.8, 490.6, 74.6, to)}Z`;

const PieVisual = () => (
  <Visual $x={90} $y={330} $w={335}>
    <VisualTitle>Count of course start by fee status and<br />Fee Paid</VisualTitle>
    <svg width="335" height="220" viewBox="90 374 335 220">
      <path d={slice(0, 160)} fill={BLUE} />
      <path d={slice(160, 280)} fill={NAVY} />
      <path d={slice(280, 360)} fill={ORANGE} />
      <path d="M169 411.500h14l2.500 8M279 426.500h-14l-5 6.500M183 573.500h14l1.500-8" fill="none" stroke="#a6a6a6" />
      <Tx x={164.500} y={403} s={13.300} len={14} a="end">14</Tx>
      <Tx x={164.500} y={421} s={13.300} len={51} a="end">(22.22%)</Tx>
      <Tx x={283.500} y={418} s={13.300} len={14.500}>28</Tx>
      <Tx x={283.500} y={436} s={13.300} len={42.500}>(44.4...)</Tx>
      <Tx x={178} y={565} s={13.300} len={13.500} a="end">21</Tx>
      <Tx x={178.500} y={583} s={13.300} len={51} a="end">(33.33%)</Tx>
      <Tx x={333.500} y={449} s={14.500} len={68.500} w={700}>fee status</Tx>
      <circle cx="340" cy="472.700" r="5.700" fill={BLUE} />
      <circle cx="340" cy="501.500" r="5.700" fill={NAVY} />
      <circle cx="340" cy="530.300" r="5.700" fill={ORANGE} />
      <Tx x={348.500} y={474} s={15} len={53}>full paid</Tx>
      <Tx x={348.500} y={502} s={15} len={57}>half paid</Tx>
      <Tx x={348.500} y={531} s={15} len={65}>patly paid</Tx>
    </svg>
  </Visual>
);

const dayCounts = [0, 0, 3, 2, 2, 3, 3, 3, 4, 0, 4, 2, 1, 2, 5, 2, 2, 1, 3, 1, 1, 2, 2, 2, 3, 0, 3, 2, 1, 2, 2];
const DayVisual = () => (
  <Visual $x={480} $y={330} $w={580}>
    <VisualTitle $ls={0.8}>Count of Name by Day</VisualTitle>
    <svg width="580" height="255" viewBox="480 352 580 255">
      <Grid d="M518 406.500H1050M518 485.500H1050M518 564.500H1050M526.500 367V564M698.500 367V564M870.500 367V564M1042.500 367V564" />
      {dayCounts.map((v, i) =>
        v ? <rect key={i} x={526.300 + i * 17.210 - 6.900} y={564 - v * 39.400} width={13.900} height={v * 39.400} fill={BLUE} /> : null
      )}
      <Tx x={507} y={406.500} s={13.300} a="end">4</Tx>
      <Tx x={507} y={485.500} s={13.300} a="end">2</Tx>
      <Tx x={507} y={564.500} s={13.300} a="end">0</Tx>
      <Tx x={526.500} y={577} s={13.300} a="middle">0</Tx>
      <Tx x={699} y={577} s={13.300} a="middle" len={14.500}>10</Tx>
      <Tx x={871} y={577} s={13.300} a="middle" len={15}>20</Tx>
      <Tx x={1043} y={577} s={13.300} a="middle" len={15}>30</Tx>
      <Tx x={784} y={595.500} s={12.300} a="middle" font={DIN} fill="#252423">Day</Tx>
      <Tx x={485.500} y={465} s={12} a="middle" len={79} font={DIN} fill="#252423" rot={-90}>Count of Name</Tx>
    </svg>
  </Visual>
);

const LineVisual = () => (
  <Visual $x={1082} $y={320} $w={280}>
    <VisualTitle $ls={0.82} $lh={21}>Count of Email and Sum of Fee<br />Paid by Course</VisualTitle>
    <svg width="280" height="246" viewBox="1082 362 280 246">
      <circle cx="1088.300" cy="383.700" r="5.700" fill={BLUE} />
      <Tx x={1096.500} y={384.500} s={13.500} len={87}>Count of Email</Tx>
      <circle cx="1195.300" cy="383.700" r="5.700" fill={NAVY} />
      <Tx x={1203.500} y={384.500} s={13.500} len={95.500}>Sum of Fee Paid</Tx>
      <Grid d="M1152 409.500H1350M1152 467.500H1350M1152 524.500H1350" />
      <Tx x={1141.500} y={409} s={13.300} a="end" len={21.500}>10K</Tx>
      <Tx x={1141.500} y={467} s={13.300} a="end" len={14.500}>5K</Tx>
      <Tx x={1141.500} y={524} s={13.300} a="end" len={14.500}>0K</Tx>
      <path d="M1173.500 524H1332" stroke={BLUE} strokeWidth="3" strokeLinecap="round" />
      <path d="M1173.500 415.500 1226.500 470.500 1279.500 473.500 1332 499" fill="none" stroke={NAVY} strokeWidth="3" strokeLinecap="round" strokeLinejoin="round" />
      <Tx x={1165} y={536} s={13.300} a="end" len={52} rot={-35}>Analytics</Tx>
      <Tx x={1217} y={537} s={13.300} a="end" len={54} rot={-35}>Leaders...</Tx>
      <Tx x={1270} y={537} s={13.300} a="end" len={53} rot={-35}>Design ...</Tx>
      <Tx x={1323} y={537} s={13.300} a="end" len={56} rot={-35}>Account...</Tx>
      <Tx x={1087.500} y={466} s={12} a="middle" len={112} font={DIN} fill="#252423" rot={-90}>Count of Email and ...</Tx>
      <Tx x={1252.500} y={596} s={12.300} a="middle" len={38.500} font={DIN} fill="#252423">Course</Tx>
    </svg>
  </Visual>
);

const DonutVisual = () => (
  <Visual $x={90} $y={634} $w={335}>
    <VisualTitle $lh={21.5} $ls={0.88}>Count of Registration Date and First<br />Email</VisualTitle>
    <svg width="335" height="210" viewBox="90 677 335 210">
      <circle cx="206.500" cy="793.500" r="58.800" fill="none" stroke={BLUE} strokeWidth="29.300" />
      <path d="M206.500 868v8.500H220" fill="none" stroke="#a6a6a6" />
      <Tx x={224.500} y={876.500} s={13.300} len={59}>63 (100%)</Tx>
      <circle cx="330" cy="794" r="5.700" fill={BLUE} />
      <Tx x={338.500} y={795} s={14.800} len={72.500}>Count of ...</Tx>
    </svg>
  </Visual>
);

const fees: [string, number, number][] = [
  ["Adelai...", 250, 46], ["Alan_B...", 100, 48], ["Alan_S...", 250, 48], ["Alan_...", 500, 41],
  ["Alessia...", 500, 49], ["Alessia...", 500, 49], ["Analise...", 250, 51], ["Barney...", 500, 49],
  ["Benny_...", 500, 51], ["Bethan...", 250, 50], ["Carina_...", 500, 52],
];
const feeX = (i: number) => 496.6 + i * 24.38;
const feeY = (v: number) => 807 - (v / 500) * 115.5;
const FeeVisual = () => (
  <Visual $x={434} $y={631} $w={335}>
    <VisualTitle $ls={0.83}>Sum of Fee Paid by Email</VisualTitle>
    <svg width="335" height="255" viewBox="434 653 335 255">
      <Grid d="M487 691.500H760M487 807.500H760" />
      {fees.slice(0, -1).map(([, v], i) => {
        const x0 = feeX(i) + 9;
        const x1 = feeX(i + 1);
        const m = (x0 + x1) / 2;
        const y0 = feeY(v);
        const y1 = feeY(fees[i + 1][1]);
        return <path key={i} d={`M${x0} ${y0}C${m} ${y0} ${m} ${y1} ${x1} ${y1}V807H${x0}Z`} fill={BLUE} fillOpacity="0.7" />;
      })}
      {fees.map(([n, v, len], i) => (
        <React.Fragment key={i}>
          <rect x={feeX(i)} y={feeY(v)} width="9" height={807 - feeY(v)} fill={BLUE} />
          <Tx x={feeX(i) + 4.800} y={814.500} s={13} a="end" len={len} rot={-90}>{n}</Tx>
        </React.Fragment>
      ))}
      <Tx x={476.500} y={691} s={13.300} a="end" len={22}>500</Tx>
      <Tx x={476.500} y={806} s={13.300} a="end">0</Tx>
      <Tx x={438.500} y={737} s={12} a="middle" len={86} font={DIN} fill="#252423" rot={-90}>Sum of Fee Paid</Tx>
      <Tx x={623.500} y={887.500} s={12.300} a="middle" len={30} font={DIN} fill="#252423">Email</Tx>
      <rect x="488" y="895" width="271" height="9" rx="4.500" fill="#f0f0f0" />
      <rect x="488" y="895" width="45" height="9" rx="4" fill="#b5b5b5" />
    </svg>
  </Visual>
);

const GaugeVisual = () => (
  <Visual $x={801} $y={650} $w={450}>
    <VisualTitle $ls={0.82}>Count of studentid and Count of Registration Date</VisualTitle>
    <svg width="450" height="205" viewBox="801 672 450 205">
      <path d="M844.300 863.700a186.500 186.700 0 0 1 373 0h-56a130.500 131 0 0 0-261 0z" fill={BLUE} />
      <Tx x={1031} y={829.500} s={62} a="middle" len={57} font={DIN} w={300}>63</Tx>
      <Tx x={838.500} y={858} s={17} a="end" font={DIN} w={300}>0</Tx>
      <Tx x={1223} y={858} s={17} len={19.500} font={DIN} w={300}>63</Tx>
    </svg>
  </Visual>
);

/* ---------- data pane ---------- */
const fields: { name: string; kind?: "date" | "sum" }[] = [
  { name: "Course" }, { name: "course start", kind: "date" }, { name: "Email" }, { name: "Fee Paid", kind: "sum" },
  { name: "fee status" }, { name: "Name" }, { name: "Registration Date", kind: "date" }, { name: "studentid" },
];
const CalendarIcon = () => (
  <svg width="16" height="16" viewBox="0 0 16 16" fill="none" stroke="#323130" strokeWidth="1.300">
    <rect x="1" y="1" width="14" height="14" rx="3" />
    <path d="M1 4.500h14" />
    <path d="M6.500 8h1.300M10 8h1.300M4 11h1.300M7 11h1.300M4 8h.6" strokeWidth="1.500" />
  </svg>
);
const SumIcon = () => (
  <svg width="16" height="16" viewBox="0 0 16 16" fill="none" stroke="#323130" strokeWidth="1.300">
    <path d="M13.500 3V1H1.500l6 7-6 7h12v-2" />
  </svg>
);

/* ---------- taskbar app icons, 30 x 30 ---------- */
const appIcons: { key: string; state?: "open" | "active"; art: React.ReactNode }[] = [
  {
    key: "start",
    art: (
      <>
        <defs>
          <linearGradient id="st" x1="0" y1="0" x2="1" y2="1">
            <stop offset="0" stopColor="#7ceafc" />
            <stop offset="1" stopColor="#0f95fb" />
          </linearGradient>
        </defs>
        <path d="M1 1h13.500v13.500H1zM15.500 1H29v13.500H15.500zM1 15.500h13.500V29H1zM15.500 15.500H29V29H15.500z" fill="url(#st)" />
      </>
    ),
  },
  {
    key: "edge",
    art: (
      <>
        <defs>
          <linearGradient id="ed1" x1="0" y1="0.200" x2="1" y2="0.500">
            <stop offset="0" stopColor="#2a9fe8" />
            <stop offset="0.500" stopColor="#2fc2dd" />
            <stop offset="1" stopColor="#66e04f" />
          </linearGradient>
          <linearGradient id="ed2" x1="0" y1="0" x2="0" y2="1">
            <stop offset="0" stopColor="#2292de" />
            <stop offset="1" stopColor="#1272c8" />
          </linearGradient>
        </defs>
        <path d="M0 14C1 5 8 0 15 0c9 0 15 6 15 13 0 5-4 8-8 8-4 0-6-1-5-3 3-4-1-9-6-9C6 9 1 11 0 14z" fill="url(#ed1)" />
        <path d="M0 15c0-5 6-7 11-6 4 1 6 4 5 7-1-1-5-1-6 3s3 10 8 10c-1 1-5 1-7 .5C4 28 0 22 0 15z" fill="url(#ed2)" />
        <path d="M12 15c-4 4-1 13 8 13 4 0 7-3 8-5-5 2-12 1-12-5-2 0-3-1-4-3z" fill="#124f92" />
      </>
    ),
  },
  {
    key: "store",
    art: (
      <>
        <defs>
          <linearGradient id="sto" x1="0" y1="0" x2="1" y2="1">
            <stop offset="0" stopColor="#0f62a8" />
            <stop offset="1" stopColor="#2b3f66" />
          </linearGradient>
        </defs>
        <path d="M8.500 8V3q0-1.500 1.500-1.500h10q1.500 0 1.500 1.500v5" fill="none" stroke="#29b6f2" strokeWidth="2" />
        <path d="M1 5.500h28V25q0 4-4 4H5q-4 0-4-4z" fill="url(#sto)" />
        <path d="M9.500 12h5v5h-5z" fill="#f25022" />
        <path d="M15.700 12h5v5h-5z" fill="#7fba00" />
        <path d="M9.500 18.200h5v5h-5z" fill="#00a4ef" />
        <path d="M15.700 18.200h5v5h-5z" fill="#ffb900" />
      </>
    ),
  },
  {
    key: "whatsapp",
    art: (
      <>
        <path d="M1.500 28.500 3.300 22A13.300 13.300 0 1 1 8 26.700z" fill="none" stroke="#168c58" strokeWidth="2.600" strokeLinejoin="round" />
        <path d="M10 8h2l2 4-1.500 2c1 2 2.500 3.500 4.500 4.500l2-2 4 2c0 3-2 4-4 4-6-1-10-5-11-10 0-2 1-4 2-4.500z" fill="#168c58" />
      </>
    ),
  },
  {
    key: "firefox",
    art: (
      <>
        <defs>
          <linearGradient id="ff" x1="0.800" y1="0" x2="0.300" y2="1">
            <stop offset="0" stopColor="#ffe14a" />
            <stop offset="0.450" stopColor="#ff8a1c" />
            <stop offset="1" stopColor="#f0205c" />
          </linearGradient>
        </defs>
        <path d="M18 0c2 3 4 5 5 8l2-2c3 4 4 7 4 11 0 7-6 12-14 12S1 23 1 16C1 12 2 9 3 6l3 4c2-2 5-3 8-3 0-3 2-5 4-7z" fill="url(#ff)" />
        <circle cx="15" cy="15.500" r="6" fill="#8740d8" />
        <path d="M3 9c4 0 8 1 12 1-1 2-4 2-4 4s1 4-1 4-6-3-7-9z" fill="#ff7b24" />
      </>
    ),
  },
  {
    key: "folder", state: "open",
    art: (
      <>
        <path d="M0 4q0-2 2-2h8l3 3v5H0z" fill="#e0a000" />
        <path d="M0 7h12l2-2h16v23H0z" fill="#ffd048" />
        <path d="M5 28v-5q0-2 2-2h16q2 0 2 2v5z" fill="#0f74c8" />
        <path d="M8.500 24.500h13" stroke="#0a4c8c" strokeWidth="1.500" />
      </>
    ),
  },
  {
    key: "chrome",
    art: (
      <>
        <circle cx="15" cy="15" r="15" fill="#fbc116" />
        <path d="M2 7.500A15 15 0 0 1 28 7.500H15L8 18z" fill="#e33b2e" />
        <path d="M8.500 18.500 2 7.500A15 15 0 0 0 15 30l6-10z" fill="#2da94f" />
        <circle cx="15" cy="15" r="7.500" fill="#fff" />
        <circle cx="15" cy="15" r="5.800" fill="#2f7de9" />
      </>
    ),
  },
  {
    key: "excel", state: "open",
    art: (
      <>
        <path d="M7 1h11v9H7z" fill="#21a366" />
        <path d="M18 1h12v9H18z" fill="#33c481" />
        <path d="M7 10h11v9H7z" fill="#107c41" />
        <path d="M18 10h12v9H18z" fill="#21a366" />
        <path d="M7 19h11v10H7z" fill="#185c37" />
        <path d="M18 19h12v10H18z" fill="#107c41" />
        <rect x="0" y="7.500" width="15" height="15" rx="1" fill="#0f7a40" />
        <path d="m4.500 11 6 8.500M10.500 11l-6 8.500" stroke="#fff" strokeWidth="2.100" />
      </>
    ),
  },
  {
    key: "powerbi", state: "active",
    art: (
      <>
        <path d="M0 0h30v30H0z" fill="#0a7cd8" />
        <path d="M16 0h10v30H16z" fill="#e4a412" />
        <path d="M20 0h6v30h-6z" fill="#c98312" />
        <path d="M9 7h10.500v23H9z" fill="#efbc28" />
        <path d="M3 15h10v15H3z" fill="#f7df78" />
      </>
    ),
  },
  {
    key: "photos", state: "open",
    art: (
      <>
        <defs>
          <linearGradient id="ph" x1="0" y1="0.300" x2="1" y2="0.500">
            <stop offset="0" stopColor="#1c7fdb" />
            <stop offset="1" stopColor="#7a55b8" />
          </linearGradient>
        </defs>
        <rect x="2" y="2" width="26" height="26" rx="4" fill="url(#ph)" />
        <path d="M5 28 16 16l12 10q-1 2-4 2z" fill="#1374cf" />
        <path d="M2 21 13 11q2-2 4 0l3 3L7 28H6q-4 0-4-4z" fill="#4cc9f5" />
        <circle cx="21.500" cy="6.500" r="2.400" fill="#fff" />
      </>
    ),
  },
];

const menus: [string, number][] = [
  ["File", 68], ["Home", 77], ["Insert", 74], ["Modeling", 103], ["View", 65.5], ["Optimize", 99.5], ["Help", 60],
];

export default function App() {
  return (
    <Shell>
      <Global />
      <TitleBar>
        <QuickIcons>
          <svg width="19" height="19" viewBox="0 0 19 19" fill="none" stroke="#323130" strokeWidth="1.500">
            <path d="M.8.800h17.400v17.400H4L.8 15.500zM5 1v7.500h10V1M6 18v-6h8v6M9 18v-3" />
          </svg>
          <svg width="19" height="19" viewBox="0 0 19 19" fill="none" stroke="#323130" strokeWidth="1.500">
            <path d="M3 1v7h7M3.500 7.500C6 3 9 1.500 12 1.500c4 0 6 4 4 8C14 12.500 11 15 9 18.500" />
          </svg>
          <svg width="19" height="19" viewBox="0 0 19 19" fill="none" stroke="#b8b6b4" strokeWidth="1.300">
            <path d="M16 1v7H9M15.500 7.500C13 3 10 1.500 7 1.500c-4 0-6 4-4 8C5 12.500 8 15 10 18.500" />
          </svg>
        </QuickIcons>
        <DocTitle>Untitled - Power BI Desktop</DocTitle>
        <UserName>Sushmitha M</UserName>
        <Avatar>
          <svg width="17" height="21" viewBox="0 0 17 21" fill="none" stroke="#616161" strokeWidth="1.500">
            <circle cx="8.500" cy="5" r="3.800" />
            <path d="M1.500 11.500h14c.5 4-2 8-7 8s-7.500-4-7-8z" />
          </svg>
        </Avatar>
        <WindowButtons>
          <svg width="13" height="13" viewBox="0 0 13 13" stroke="#242424" strokeWidth="1.300"><path d="M0 6.500h13" /></svg>
          <svg width="13" height="13" viewBox="0 0 13 13" fill="none" stroke="#242424" strokeWidth="1.200"><rect x=".7" y=".7" width="11.500" height="11.500" rx="1.500" /></svg>
          <svg width="13" height="13" viewBox="0 0 13 13" stroke="#242424" strokeWidth="1.300"><path d="m.5.500 12 12M12.500.500l-12 12" /></svg>
        </WindowButtons>
      </TitleBar>

      <MenuBar>
        {menus.map(([m, w]) => (
          <MenuSlot key={m} $w={w}>
            <MenuItem $active={m === "Home"}>{m}</MenuItem>
          </MenuSlot>
        ))}
        <ShareButton>
          <svg width="20" height="18" viewBox="0 0 20 18" fill="none" stroke="#fff" strokeWidth="1.500" strokeLinejoin="round">
            <path d="M1 4v13h14v-5" />
            <path d="M12 1v3.500C7 5 5 8 4.500 13 6.500 10 9 9.300 12 9.300V13l6.500-6z" />
          </svg>
          <span>Share</span>
          <svg width="12" height="8" viewBox="0 0 12 8" fill="none" stroke="#fff" strokeWidth="1.500"><path d="M1 1.500 6 6.500 11 1.500" /></svg>
        </ShareButton>
      </MenuBar>

      <Ribbon>
        <Group $w={201}>
          <GroupBody $pl={10}>
            <RibbonBtn icon="paste" a="Paste" w={50} off />
            <ClipList>
              <ClipItem>
                <svg width="20" height="20" viewBox="0 0 20 20" fill="none" stroke="#b8b6b4" strokeWidth="1.400">
                  <path d="M5 1l7 13M14 1 7 14" />
                  <circle cx="5.500" cy="16.500" r="2.300" stroke="#9fcdea" />
                  <circle cx="13.500" cy="16.500" r="2.300" stroke="#9fcdea" />
                </svg>
                Cut
              </ClipItem>
              <ClipItem>
                <svg width="20" height="20" viewBox="0 0 20 20" fill="#fff" stroke="#b8b6b4" strokeWidth="1.400">
                  <path d="M7 17H0V1h7l3 2.500" />
                  <path d="M7 4.500h8l4 4V19H7zM15 4.500v4h4M10 11.500h6M10 15h6" />
                </svg>
                Copy
              </ClipItem>
              <ClipItem>
                <svg width="20" height="20" viewBox="0 0 20 20" fill="none" stroke="#c8c6c4" strokeWidth="1.400">
                  <path d="m1 9 6-3 6 7-4 6z" fill="#fae0c8" stroke="#f3c49a" />
                  <path d="m8 5 7 8 2-2-3-3 5-6-2-2-5 6-2-3z" fill="#f5f5f5" />
                </svg>
                Format painter
              </ClipItem>
            </ClipList>
          </GroupBody>
          <GroupLabel>Clipboard</GroupLabel>
        </Group>
        {groups.map((g) => (
          <Group key={g.label} $w={g.w}>
            <GroupBody $pl={g.pl}>
              {g.items.map((b) => (
                <RibbonBtn key={b.icon} {...b} />
              ))}
            </GroupBody>
            <GroupLabel>{g.label}</GroupLabel>
          </Group>
        ))}
        <RibbonEnd>
          <svg width="12" height="8" viewBox="0 0 12 8" fill="none" stroke="#252423" strokeWidth="1.800"><path d="M1 6.500 6 1.500l5 5" /></svg>
        </RibbonEnd>
      </Ribbon>

      <Workspace>
        <Rail>
          <RailItem $active>
            <svg width="17" height="18" viewBox="0 0 17 18" fill="none" stroke="#323130" strokeWidth="1.300">
              <path d="M.7 0v17H17" /><path d="M3.500 5v10M6 5v10M3.500 5H6M8.500 8v7M11 8v7M8.500 8H11M13.500 2v13M16 2v13M13.500 2H16" strokeWidth="1.100" />
            </svg>
          </RailItem>
          <RailItem>
            <svg width="21" height="20" viewBox="0 0 21 20" fill="none" stroke="#323130" strokeWidth="1.300">
              <path d="M.7.700h19.600v18.600H.7zM.7 4h19.600M.7 9h19.600M.7 14h19.600M7 4v15M14 4v15" />
            </svg>
          </RailItem>
          <RailItem>
            <svg width="23" height="23" viewBox="0 0 23 23" fill="none" stroke="#323130" strokeWidth="1.300">
              <path d="M1 7h9v9H1zM1 10h9M13 1h9v8h-9zM13 4h9M13 14h9v8h-9zM13 17h9M5.500 7V3H13M5.500 16v4H13" />
            </svg>
          </RailItem>
          <RailItem>
            <svg width="24" height="22" viewBox="0 0 24 22" fill="none" stroke="#323130" strokeWidth="1.300">
              <path d="M6 12V1.500h8l5 5V12M14 1.500v5h5M20.500 7l1.500 2v8l-3 3" />
              <text x="0" y="21" fontSize="8.500" fontWeight="600" fill="#323130" stroke="none" letterSpacing="0">DAX</text>
            </svg>
          </RailItem>
          <RailItem>
            <svg width="24" height="22" viewBox="0 0 24 22" fill="none" stroke="#323130" strokeWidth="1.300">
              <path d="M5 12V1.500h8l5 5V12M13 1.500v5h5" />
              <text x="0" y="21" fontSize="8.500" fontWeight="600" fill="#323130" stroke="none" letterSpacing="0">TMDL</text>
            </svg>
          </RailItem>
        </Rail>

        <Center>
          <CanvasRow>
            <CanvasArea>
              <ReportPage>
                <Visual $x={439} $y={240} $w={514}>
                  <ReportHeading>STUDENT_DETAILS</ReportHeading>
                </Visual>
                <PieVisual />
                <DayVisual />
                <LineVisual />
                <DonutVisual />
                <FeeVisual />
                <GaugeVisual />
              </ReportPage>
              <VScroll />
              <HScroll />
            </CanvasArea>
            <FiltersPane>
              <Double dir={-1} c="#b296e0" />
              <svg width="18" height="38" viewBox="-8 -26 18 38" stroke="#b296e0" strokeWidth="1.500">
                <path d="M9 0v12M5 2.500v7M1.500 4.500v3" />
              </svg>
              <FiltersLabel>Filters</FiltersLabel>
            </FiltersPane>
          </CanvasRow>
          <Tabs>
            <ViewToggle $w={55} $active>
              <svg width="20" height="25" viewBox="0 0 20 25" fill="none" stroke="#252423" strokeWidth="1.600">
                <rect x="1.500" y="3.500" width="17" height="13" rx="2" />
                <path d="M7 17v4M13 17v4M4.500 21.500h11" />
              </svg>
            </ViewToggle>
            <ViewToggle $w={54}>
              <svg width="13" height="25" viewBox="0 0 13 25" fill="none" stroke="#252423" strokeWidth="1.500">
                <rect x="1" y="2" width="11" height="21" rx="2" /><path d="M4.500 19.500h4" />
              </svg>
            </ViewToggle>
            <TabArrows>
              <svg width="8" height="12" viewBox="0 0 8 12" fill="none" stroke="#605e5c"><path d="M7 1.500v9L1 6z" /></svg>
              <svg width="8" height="12" viewBox="0 0 8 12" fill="none" stroke="#605e5c"><path d="M1 1.500v9L7 6z" /></svg>
            </TabArrows>
            <PageTab>Page 1</PageTab>
            <AddTab>
              <svg width="14" height="14" viewBox="0 0 14 14" stroke="#fff" strokeWidth="3"><path d="M7 0v14M0 7h14" /></svg>
            </AddTab>
          </Tabs>
        </Center>

        <Pane>
          <PaneHead>
            Visualizations
            <Double dir={1} c="#252423" />
          </PaneHead>
          <BuildLabel>Build visual</BuildLabel>
          <ModeTabs>
            <ModeTab $on>
              <svg width="30" height="30" viewBox="0 0 30 30">
                <path d="M0 .7h24" stroke="#605e5c" strokeWidth="1.300" />
                <g fill={GREEN} stroke="#323130" strokeDasharray="2.500 1.500">
                  <rect x="1" y="7" width="28" height="8.500" /><rect x="1" y="20.500" width="28" height="8.500" />
                </g>
              </svg>
            </ModeTab>
            <ModeTab>
              <svg width="30" height="30" viewBox="0 0 30 30" fill="none" stroke="#605e5c" strokeWidth="1.300">
                <path d="M6 29.500H1.700V.7H13l9 9V12M13 .7v9h9" />
                <path d="M30.500 11c-5 3-8 7-11 11l2.500 2.500C26 21 29 16 30.500 11zM19 22c-5 0-3 5-9 6.500 6 2 12 0 12-4" fill="#f5f5f5" />
              </svg>
            </ModeTab>
          </ModeTabs>
          <svg width="225" height="21" viewBox="0 0 225 21" fill="none" stroke="#c8c6c4"><path d="M0 15.500h20.500L30 6.500l9.500 9H225" /></svg>
          <VizGrid>
            {vizIcons.map((icon, i) => (
              <svg key={i} width="24" height="24" viewBox="0 0 24 24">{icon}</svg>
            ))}
          </VizGrid>
          <Dots><i /><i /><i /></Dots>
          <WellLabel $mt={11}>Values</WellLabel>
          <Well $mt={7} $h={35} $pl={13}>Add data fields here</Well>
          <WellLabel $mt={12} $bold>Drill through</WellLabel>
          <SwitchRow $mt={12}>Cross-report<Switch><i />Off</Switch></SwitchRow>
          <SwitchRow $mt={14}>Keep all filters<Switch $on><i />On</Switch></SwitchRow>
          <Well $mt={12} $h={32} $pl={10} $white>Add drill-through fields here</Well>
        </Pane>

        <Pane>
          <PaneHead>
            Data
            <Double dir={1} c="#252423" />
          </PaneHead>
          <SearchBox>
            <svg width="18" height="18" viewBox="0 0 18 18" fill="none" stroke="#424242" strokeWidth="1.300">
              <circle cx="7" cy="7" r="6" /><path d="m11.500 11.500 6 6" />
            </svg>
            Search
          </SearchBox>
          <TableRow>
            <svg width="10" height="8" viewBox="0 0 10 8" fill="none" stroke="#424242" strokeWidth="1.300"><path d="m.5 1.500 4.500 5 4.500-5" /></svg>
            <svg width="16" height="16" viewBox="0 0 16 16" fill="none" stroke="#323130" strokeWidth="1.500">
              <rect x="1" y="1" width="14" height="14" rx="3" /><path d="M5.500 1v14M10.500 1v14M1 5.500h14M1 10.500h14" />
            </svg>
            students_details (2)
          </TableRow>
          {fields.map((f) => (
            <FieldRow key={f.name}>
              {f.kind === "date" ? (
                <svg width="7" height="11" viewBox="0 0 7 11" fill="none" stroke="#605e5c" strokeWidth="1.300"><path d="m1 .7 4.800 4.800L1 10.300" /></svg>
              ) : <span />}
              <Checkbox />
              {f.kind === "date" ? <CalendarIcon /> : f.kind === "sum" ? <SumIcon /> : <span />}
              <span>{f.name}</span>
            </FieldRow>
          ))}
        </Pane>
      </Workspace>

      <StatusBar>
        <PageCount>Page 1 of 1</PageCount>
        <svg width="152" height="14" viewBox="1656 998 152 14" stroke="#424242" fill="none">
          <path d="M1656 1005h6M1799 1005h10M1804 1000v10" strokeWidth="2" />
          <path d="M1667 1005.500h125M1729.500 1001.500v8" />
          <path d="M1722.500 999v13" strokeWidth="5" />
        </svg>
        <ZoomValue>90%</ZoomValue>
        <svg width="18" height="12" viewBox="0 0 18 12" fill="none" stroke="#323130" strokeWidth="1.300">
          <rect x=".7" y=".7" width="16.600" height="10.600" rx="1.500" />
          <path d="M6 3.500H4v5h2M12 3.500h2v5h-2" strokeDasharray="3 1.500" />
        </svg>
      </StatusBar>

      <Taskbar>
        <Apps>
          {appIcons.map((a) => (
            <AppButton key={a.key} $state={a.state}>
              <svg width="30" height="30" viewBox="0 0 30 30">{a.art}</svg>
            </AppButton>
          ))}
        </Apps>
        <Tray>
          <svg width="14" height="9" viewBox="0 0 14 9" fill="none" stroke="#fff" strokeWidth="1.700"><path d="M1 7.500 7 1.500l6 6" /></svg>
          <svg width="43" height="20" viewBox="-23 0 43 20" fill="none" stroke="#050d1c" strokeWidth="1.400">
            <path d="M1 10C1 1 14-2 18 6M18.500 1v5.500H13M1.500 19v-5H7M1.500 14c2 3 5 5 9 5" />
            <circle cx="15" cy="15" r="5" fill="#ff9800" stroke="none" />
          </svg>
          <Lang>ENG<br />IN</Lang>
          <TrayIcons>
            <svg width="20" height="18" viewBox="0 0 20 18" fill="none" stroke="#fff" strokeWidth="1.500">
              <path d="M.8 7a13 13 0 0 1 18.400 0M3.800 10a8.800 8.800 0 0 1 12.400 0M6.800 13a4.600 4.600 0 0 1 6.400 0" />
              <circle cx="10" cy="15.500" r="1.600" fill="#fff" stroke="none" />
            </svg>
            <svg width="21" height="18" viewBox="0 0 21 18" fill="none" stroke="#fff" strokeWidth="1.400">
              <path d="M1 6.500h3l5-4.500v14l-5-4.500H1zM11.500 6c1.500 2 1.500 4 0 6M14 4c3 3 3 7 0 10" />
              <path d="M16.500 1.500c4.500 4 4.500 11 0 15" stroke="#5c7397" />
            </svg>
            <svg width="21" height="18" viewBox="0 0 21 18" fill="none" stroke="#fff" strokeWidth="1.400">
              <path d="M7 4h9q1.500 0 1.500 1.500v8q0 1.500-1.500 1.500H3q-1.500 0-1.500-1.500V10M18 7.500h1.500v4H18" />
              <path d="M8 6.500h7.500V13H4z" fill="#fff" stroke="none" />
              <path d="M5 0 1 6.500h2.500L2.500 11 7.500 4H5z" fill="#fff" stroke="none" />
            </svg>
          </TrayIcons>
          <Clock>23:02<br />03-09-2025</Clock>
        </Tray>
      </Taskbar>
    </Shell>
  );
}
